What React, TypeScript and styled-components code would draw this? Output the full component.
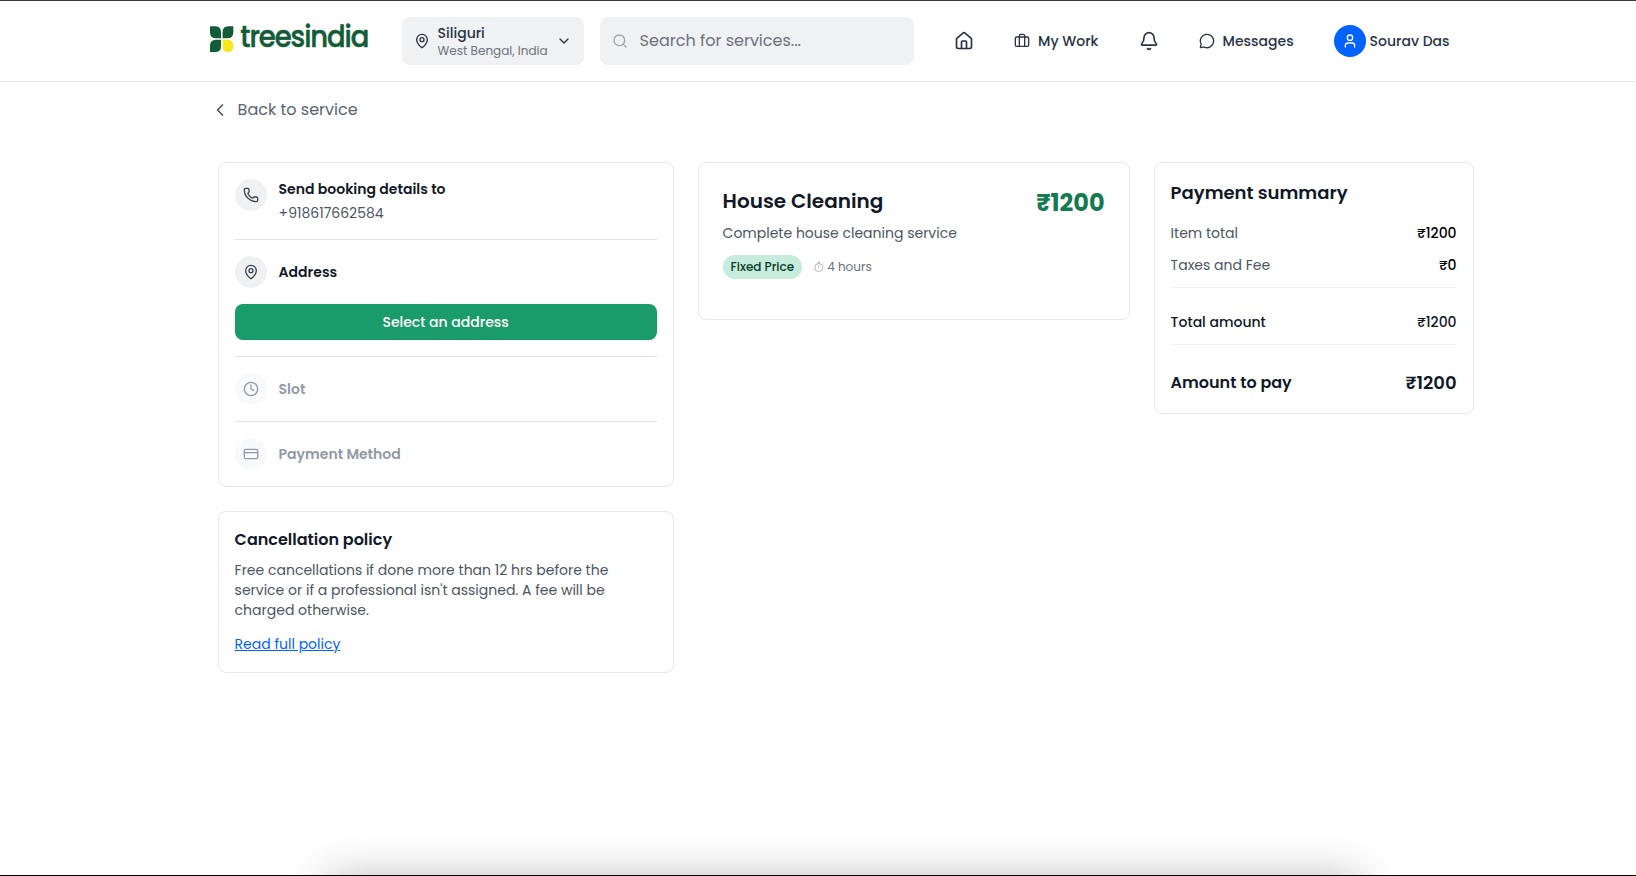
import React from "react";
import styled, { createGlobalStyle } from "styled-components";
import {
  Bell, Briefcase, ChevronDown, ChevronLeft, Clock, CreditCard, Home, MapPin,
  MessageCircle, Phone, Search, User,
} from "lucide-react";

const GlobalStyle = createGlobalStyle`
  *, *::before, *::after { box-sizing: border-box; }
  html, body { margin: 0; overflow: hidden; }
  body { background: #fff; color: #000; font-family: Poppins, Inter, sans-serif; }
  h1, h2, h3, p { margin: 0; }
  svg { display: block; flex: none; }
`;

const Page = styled.div`
  position: relative;
  display: flex;
  flex-direction: column;
  height: 876px;
  border-top: 1px solid #3a3942;
  border-bottom: 1px solid #000;
  overflow: hidden;
`;

interface TextProps {
  $size?: number;
  $line?: number;
  $weight?: number;
  $color?: string;
}

const Text = styled.span<TextProps>`
  display: block;
  white-space: nowrap;
  font-size: ${(p) => p.$size ?? 14}px;
  line-height: ${(p) => p.$line ?? 20}px;
  font-weight: ${(p) => p.$weight ?? 400};
  color: ${(p) => p.$color ?? "#111827"};
`;

const Header = styled.header`
  display: flex;
  align-items: center;
  height: 81px;
  flex: none;
  padding-left: 209.6px;
  border-bottom: 1px solid #e5e7eb;
  color: #2b3445;
`;

const Logo = styled.svg`
  width: 162px;
  height: 46px;
  margin-right: 30px;
  overflow: visible;
`;

const LocationButton = styled.button`
  display: flex;
  align-items: center;
  gap: 8px;
  width: 182px;
  height: 48px;
  padding: 0 12px;
  border: 0;
  border-radius: 8px;
  background: #f0f1f3;
  color: inherit;
  font-family: inherit;
  text-align: left;
`;

const LocationLabel = styled.span`
  flex: 1;
`;

const SearchBox = styled.div`
  display: flex;
  align-items: center;
  gap: 12px;
  width: 314px;
  height: 48px;
  margin-left: 16px;
  padding: 0 12px;
  border-radius: 8px;
  background: #f0f1f3;
  color: #9ca3af;
`;

const Nav = styled.nav`
  display: flex;
  align-items: center;
  padding-left: 40px;
`;

const NavItem = styled.a<{ $width: number; $gap?: number }>`
  display: flex;
  align-items: center;
  gap: ${(p) => p.$gap ?? 8}px;
  width: ${(p) => p.$width}px;
`;

const Avatar = styled.span`
  display: grid;
  place-items: center;
  width: 32px;
  height: 32px;
  border-radius: 50%;
  background: #0062ff;
  color: #fff;
`;

const Main = styled.main`
  width: 1256px;
  margin-left: 217.6px;
`;

const BackLink = styled.a`
  display: flex;
  align-items: center;
  gap: 8px;
  height: 24px;
  margin: 16px 0 40px -8px;
  color: #4b5563;
`;

const Columns = styled.div`
  display: grid;
  grid-template-columns: 456px 432px 320px;
  gap: 24px;
  align-items: start;
`;

const Stack = styled.div`
  display: flex;
  flex-direction: column;
  gap: 24px;
`;

const Card = styled.section<{ $pad?: number }>`
  padding: ${(p) => p.$pad ?? 16}px;
  border: 1px solid #e5e7eb;
  border-radius: 8px;
  background: #fff;
`;

const Step = styled.div`
  padding-bottom: 16px;
  & + & {
    padding-top: 16px;
    border-top: 1px solid #e2e4e9;
  }
  &:last-child {
    padding-bottom: 0;
  }
`;

const StepHead = styled.div<{ $top?: boolean }>`
  display: flex;
  align-items: ${(p) => (p.$top ? "flex-start" : "center")};
  gap: 12px;
`;

const StepIcon = styled.span<{ $muted?: boolean }>`
  display: grid;
  place-items: center;
  width: 32px;
  height: 32px;
  border-radius: 50%;
  background: ${(p) => (p.$muted ? "#f8f9fb" : "#f0f1f3")};
  color: ${(p) => (p.$muted ? "#9299a6" : "#374151")};
`;

const StepLines = styled.div`
  display: flex;
  flex-direction: column;
  gap: 4px;
`;

const PrimaryButton = styled.button`
  display: flex;
  align-items: center;
  justify-content: center;
  width: 100%;
  height: 36px;
  margin-top: 16px;
  padding: 0;
  border: 0;
  border-radius: 8px;
  background: #1a9b6a;
  font-family: inherit;
`;

const PolicyText = styled.div`
  margin-top: 8px;
`;

const PolicyLink = styled(Text)`
  margin-top: 12px;
  text-decoration: underline;
`;

const ServiceTop = styled.div`
  display: flex;
  justify-content: space-between;
  align-items: flex-start;
  margin-bottom: 16px;
`;

const ServiceNote = styled(Text)`
  margin-top: 8px;
`;

const Tags = styled.div`
  display: flex;
  align-items: center;
  gap: 12px;
  margin-top: 12px;
`;

const Badge = styled.span`
  display: flex;
  align-items: center;
  height: 24px;
  padding: 0 8px;
  border-radius: 12px;
  background: #c5ecdc;
`;

const Duration = styled.span`
  display: flex;
  align-items: center;
  gap: 3px;
`;

const SummaryRow = styled.div<{ $top: number }>`
  display: flex;
  justify-content: space-between;
  margin-top: ${(p) => p.$top}px;
`;

const Rule = styled.hr`
  height: 1px;
  margin: 12px 0 0;
  border: 0;
  background: #f0f1f3;
`;

const DockShadow = styled.div`
  position: absolute;
  left: 326px;
  top: 879px;
  width: 1034px;
  height: 80px;
  box-shadow: 0 0 46px rgba(0, 0, 0, 0.31);
`;

const BrandMark = () => (
  <Logo viewBox="0 0 162 46" role="img" aria-label="treesindia">
    <g fill="#125c38">
      <path d="M0 8.300h5.500q5.500 0 5.500 6v6H6q-6 0-6-6z" />
      <path d="M12.600 20.300v-6q0-6 5.500-6h5.200v6q0 6-6 6z" />
      <path d="M0 34V28q0-6.300 6-6.300h5V28q0 6-5.500 6z" />
    </g>
    <path d="M12.600 21.700H18q5.300 0 5.300 6.300 0 6-5.300 6-5.400 0-5.400-6z" fill="#f9e71c" />
    <text
      x="30.300" y="29.400" textLength="128" lengthAdjust="spacingAndGlyphs" letterSpacing="-1.2"
      fontFamily="Poppins, Inter, sans-serif" fontSize="29.500" fontWeight="500"
      fill="#125c38" stroke="#125c38" strokeWidth=".5" strokeLinejoin="round"
    >
      treesindia
    </text>
  </Logo>
);

const StopwatchIcon = () => (
  <svg width="10" height="12" viewBox="0 0 10 12" fill="none" stroke="#9ca3af" strokeWidth=".8">
    <circle cx="4.800" cy="6.500" r="4" />
    <path d="M4.800 6.800V4.200M4.800 2.500V1.200M3.500 1.200h2.600M7.800 3.300l.8-.8" />
  </svg>
);

export default function App() {
  return (
    <Page>
      <GlobalStyle />
      <Header>
        <BrandMark />
        <LocationButton>
          <MapPin size={16} />
          <LocationLabel>
            <Text $weight={500} $line={18} $color="#2b3445">Siliguri</Text>
            <Text $size={12} $line={17} $color="#6b7280">West Bengal, India</Text>
          </LocationLabel>
          <ChevronDown size={16} />
        </LocationButton>
        <SearchBox>
          <Search size={16} />
          <Text $size={16} $line={24} $color="#6b7280">Search for services...</Text>
        </SearchBox>
        <Nav>
          <NavItem $width={60.5}><Home size={20} /></NavItem>
          <NavItem $width={124.5}>
            <Briefcase size={16} />
            <Text $weight={500} $color="#2b3445">My Work</Text>
          </NavItem>
          <NavItem $width={60}><Bell size={20} /></NavItem>
          <NavItem $width={135}>
            <MessageCircle size={16} />
            <Text $weight={500} $color="#2b3445">Messages</Text>
          </NavItem>
          <NavItem $width={130} $gap={4}>
            <Avatar><User size={16} /></Avatar>
            <Text $weight={500} $color="#2b3445">Sourav Das</Text>
          </NavItem>
        </Nav>
      </Header>

      <Main>
        <BackLink>
          <ChevronLeft size={20} />
          <Text $size={16} $line={24} $color="#5b6371">Back to service</Text>
        </BackLink>
        <Columns>
          <Stack>
            <Card>
              <Step>
                <StepHead $top>
                  <StepIcon><Phone size={16} /></StepIcon>
                  <StepLines>
                    <Text as="h3" $weight={600}>Send booking details to</Text>
                    <Text $color="#4b5563">+918617662584</Text>
                  </StepLines>
                </StepHead>
              </Step>
              <Step>
                <StepHead>
                  <StepIcon><MapPin size={16} /></StepIcon>
                  <Text as="h3" $weight={600}>Address</Text>
                </StepHead>
                <PrimaryButton>
                  <Text $weight={500} $color="#fff">Select an address</Text>
                </PrimaryButton>
              </Step>
              <Step>
                <StepHead>
                  <StepIcon $muted><Clock size={16} /></StepIcon>
                  <Text as="h3" $weight={600} $color="#9299a6">Slot</Text>
                </StepHead>
              </Step>
              <Step>
                <StepHead>
                  <StepIcon $muted><CreditCard size={16} /></StepIcon>
                  <Text as="h3" $weight={600} $color="#9299a6">Payment Method</Text>
                </StepHead>
              </Step>
            </Card>

            <Card>
              <Text as="h2" $size={16} $line={24} $weight={600}>Cancellation policy</Text>
              <PolicyText>
                <Text $color="#4b5563">Free cancellations if done more than 12 hrs before the</Text>
                <Text $color="#4b5563">service or if a professional isn't assigned. A fee will be</Text>
                <Text $color="#4b5563">charged otherwise.</Text>
              </PolicyText>
              <PolicyLink $line={24} $color="#0062ff">Read full policy</PolicyLink>
            </Card>
          </Stack>

          <Card $pad={24}>
            <ServiceTop>
              <div>
                <Text as="h1" $size={20} $line={28} $weight={600}>House Cleaning</Text>
                <ServiceNote $color="#4b5563">Complete house cleaning service</ServiceNote>
                <Tags>
                  <Badge>
                    <Text $size={12} $line={16} $weight={500} $color="#0d3b28">Fixed Price</Text>
                  </Badge>
                  <Duration>
                    <StopwatchIcon />
                    <Text $size={12} $line={16} $color="#6b7280">4 hours</Text>
                  </Duration>
                </Tags>
              </div>
              <Text $size={24} $line={32} $weight={700} $color="#147a51">₹1200</Text>
            </ServiceTop>
          </Card>

          <Card>
            <Text as="h2" $size={18} $line={28} $weight={600}>Payment summary</Text>
            <SummaryRow $top={16}>
              <Text $color="#4b5563">Item total</Text>
              <Text $weight={500} $color="#000">₹1200</Text>
            </SummaryRow>
            <SummaryRow $top={12}>
              <Text $color="#4b5563">Taxes and Fee</Text>
              <Text $weight={500} $color="#000">₹0</Text>
            </SummaryRow>
            <Rule />
            <SummaryRow $top={24}>
              <Text $weight={500}>Total amount</Text>
              <Text $weight={500}>₹1200</Text>
            </SummaryRow>
            <Rule />
            <SummaryRow $top={24}>
              <Text $size={16} $line={28} $weight={600}>Amount to pay</Text>
              <Text $size={18} $line={28} $weight={600}>₹1200</Text>
            </SummaryRow>
          </Card>
        </Columns>
      </Main>
      <DockShadow />
    </Page>
  );
}
